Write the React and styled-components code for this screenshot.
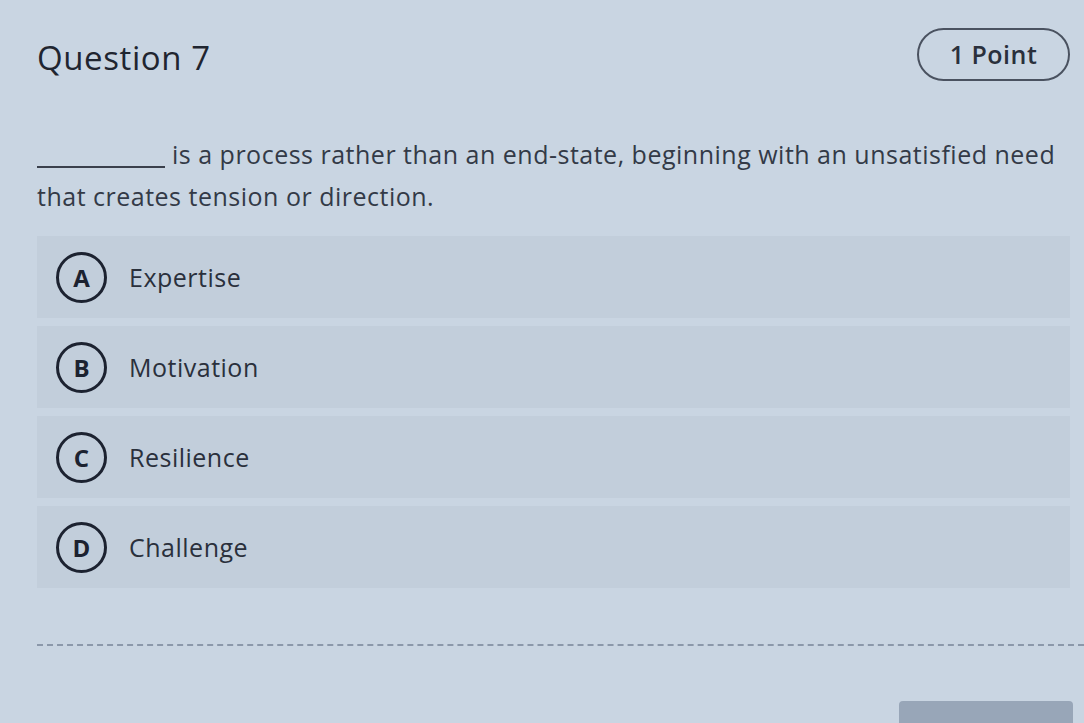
import React from "react";
import styled, { createGlobalStyle } from "styled-components";

const GlobalStyle = createGlobalStyle`
  html, body {
    margin: 0;
    padding: 0;
    background: #c9d5e2;
    font-family: "Open Sans", "Noto Sans", sans-serif;
    color: #262c38;
  }
`;

const options = [
  { letter: "A", text: "Expertise" },
  { letter: "B", text: "Motivation" },
  { letter: "C", text: "Resilience" },
  { letter: "D", text: "Challenge" },
];

function App() {
  return (
    <>
      <GlobalStyle />
      <Page>
        <Header>
          <Title>Question 7</Title>
          <Points>1 Point</Points>
        </Header>
        <Prompt>
          <Blank /> is a process rather than an end-state, beginning with an
          unsatisfied need that creates tension or direction.
        </Prompt>
        <OptionList>
          {options.map((o) => (
            <Option key={o.letter}>
              <Letter>{o.letter}</Letter>
              <OptionText>{o.text}</OptionText>
            </Option>
          ))}
        </OptionList>
        <Divider />
        <Footer>
          <NextButton />
        </Footer>
      </Page>
    </>
  );
}

export default App;

const Page = styled.div`
  width: 1084px;
  height: 723px;
  overflow: hidden;
  padding: 26px 14px 0 37px;
  box-sizing: border-box;
  display: flex;
  flex-direction: column;
`;

const Header = styled.div`
  display: flex;
  align-items: center;
  justify-content: space-between;
  height: 56px;
`;

const Title = styled.h1`
  margin: 0;
  font-size: 33px;
  font-weight: 500;
  color: #1f2530;
  letter-spacing: 0.6px;
  padding-top: 6px;
`;

const Points = styled.div`
  width: 153px;
  height: 53px;
  box-sizing: border-box;
  border: 2px solid #4a5260;
  border-radius: 27px;
  display: flex;
  align-items: center;
  justify-content: center;
  font-size: 25px;
  font-weight: 600;
  letter-spacing: 0.5px;
  color: #2a303c;
`;

const Prompt = styled.p`
  margin: 51px 0 0 0;
  font-size: 25px;
  line-height: 42px;
  letter-spacing: 0.5px;
  color: #333a47;
`;

const Blank = styled.span`
  display: inline-block;
  width: 128px;
  height: 1px;
  border-bottom: 2px solid #3a404c;
  margin-right: 0;
  vertical-align: -4px;
`;

const OptionList = styled.div`
  margin-top: 19px;
  display: flex;
  flex-direction: column;
  gap: 8px;
`;

const Option = styled.div`
  height: 82px;
  background: #c2cedb;
  display: flex;
  align-items: center;
  padding-left: 19px;
  gap: 22px;
`;

const Letter = styled.div`
  width: 51px;
  height: 51px;
  box-sizing: border-box;
  border: 3px solid #1c2230;
  border-radius: 50%;
  display: flex;
  align-items: center;
  justify-content: center;
  font-size: 24px;
  font-weight: 700;
  color: #1c2230;
`;

const OptionText = styled.span`
  font-size: 25px;
  letter-spacing: 0.5px;
  color: #2a303c;
`;

const Divider = styled.div`
  margin-top: 56px;
  margin-right: -14px;
  border-top: 2px dashed #8b98aa;
`;

const Footer = styled.div`
  flex: 1;
  display: flex;
  justify-content: flex-end;
  align-items: flex-end;
`;

const NextButton = styled.div`
  width: 174px;
  height: 22px;
  background: #98a6b8;
  border-radius: 4px 4px 0 0;
  margin-right: -3px;
`;
